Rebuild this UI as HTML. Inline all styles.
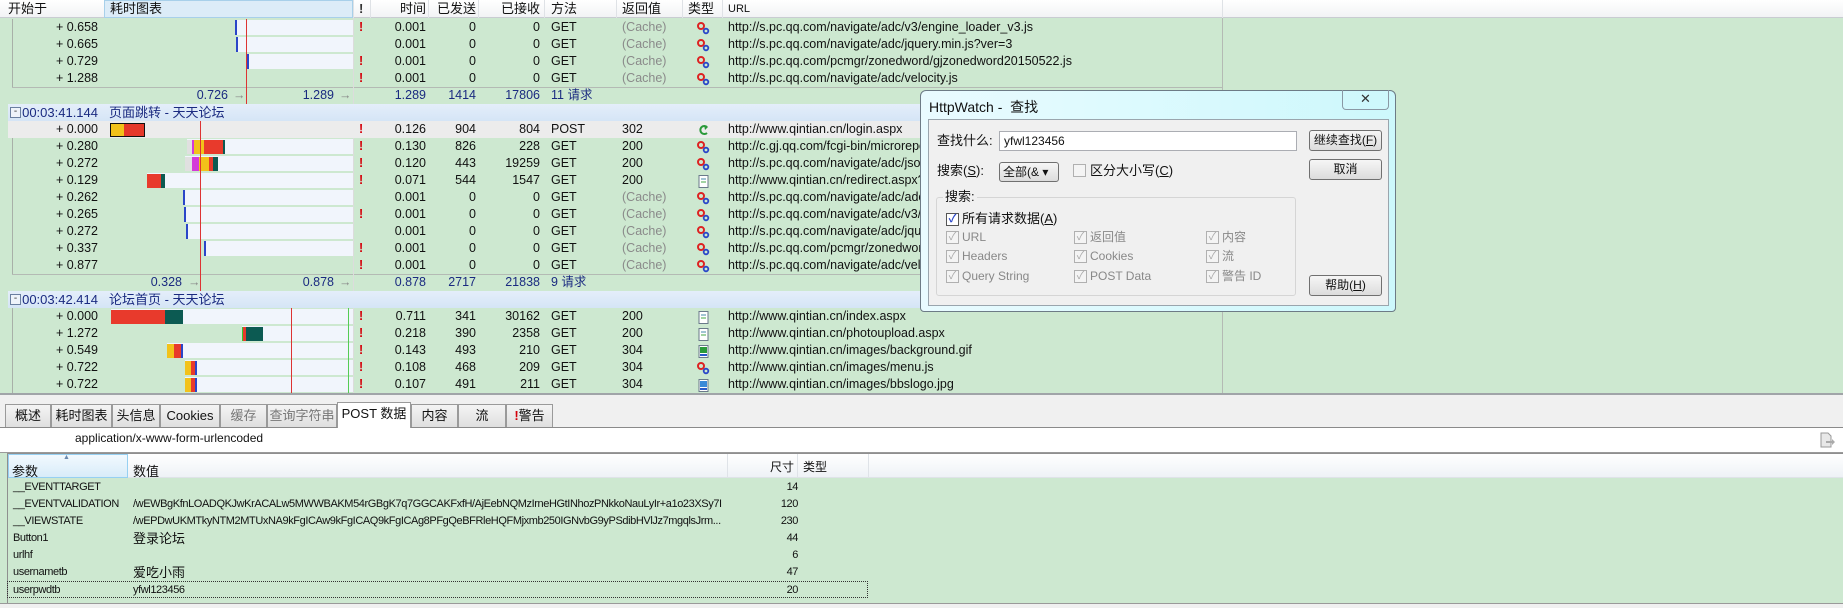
<!DOCTYPE html>
<html><head><meta charset="utf-8">
<style>
*{margin:0;padding:0;box-sizing:border-box}
body{width:1843px;height:608px;overflow:hidden;background:#cde8d0;font-family:"Liberation Sans","Noto Sans CJK SC",sans-serif;font-size:12px;color:#111;position:relative}
.a{position:absolute}
.hdr{left:0;top:0;width:1843px;height:18px;background:linear-gradient(#fff,#f2f3f5);border-bottom:1px solid #c9ccd2}
.hdr span{position:absolute;top:0;line-height:18px;font-size:13px}
.vd{position:absolute;top:0;width:1px;height:18px;background:#dfe2e6}
.r{position:absolute;left:0;width:1222px;height:17px}
.r span{position:absolute;top:0;line-height:17px;white-space:nowrap;font-size:12.5px}
.c0{left:0;width:98px;text-align:right}
.ex{left:359px;color:#d4000a;font-weight:bold}
.c1{left:370px;width:56px;text-align:right}
.c2{left:430px;width:46px;text-align:right}
.c3{left:480px;width:60px;text-align:right}
.c4{left:551px}
.c5{left:622px}
.g{color:#8a8a8a}
.url{left:728px}
.b{position:absolute;top:2px;height:14px}
.wb{position:absolute;top:1px;height:15px;background:#f1f5fc;right:869px}
.gh{position:absolute;left:8px;width:1214px;height:17px;background:linear-gradient(#e4eefa,#d5e5f6)}
.gh span{position:absolute;line-height:17px;color:#1a2a80;font-size:13px}
.sm span{color:#1a2a80}
.ico{position:absolute;left:697px;top:3px}
.tab{position:absolute;top:404px;height:24px;border:1px solid #9a9a9a;border-bottom:none;background:linear-gradient(#f4f4f4,#dedede);line-height:22px;text-align:center;font-size:13px}
.pr{position:absolute;left:7px;width:1836px;height:17px}
.pr span{position:absolute;line-height:17px;font-size:11px;letter-spacing:-0.4px;white-space:nowrap}
.dlg{left:920px;top:90px;width:476px;height:222px;background:linear-gradient(90deg,#e9fbff,#cdf8fc);border:1px solid #6d7b86;border-radius:6px 6px 4px 4px}
.cl{left:7px;top:28px;width:461px;height:187px;background:#f0f0f0;border:1px solid #9aa5ad}
.btn{position:absolute;width:73px;height:21px;border:1px solid #707070;border-radius:3px;background:linear-gradient(#f6f6f6,#dcdcdc);text-align:center;line-height:19px;font-size:12px}
.cb{position:absolute;width:13px;height:13px;border:1px solid #b0b0b0;background:#f4f4f4;font-size:11px;line-height:11px;text-align:center;color:#aaa}
.dl{position:absolute;font-size:12px;line-height:16px;white-space:nowrap}
.gr{color:#888}
</style></head><body>

<div class="a hdr">
<span style="left:8px">开始于</span>
<div class="a" style="left:104px;top:0;width:249px;height:18px;background:#dcecf8;border:1px solid #a8d0ea"></div>
<span style="left:110px">耗时图表</span>
<div class="vd" style="left:353px"></div>
<span style="left:359px;color:#333;font-weight:bold">!</span>
<div class="vd" style="left:370px"></div>
<span style="left:370px;width:56px;text-align:right">时间</span>
<div class="vd" style="left:428px"></div>
<span style="left:430px;width:46px;text-align:right">已发送</span>
<div class="vd" style="left:478px"></div>
<span style="left:480px;width:60px;text-align:right">已接收</span>
<div class="vd" style="left:544px"></div>
<span style="left:551px">方法</span>
<div class="vd" style="left:616px"></div>
<span style="left:622px">返回值</span>
<div class="vd" style="left:682px"></div>
<span style="left:688px">类型</span>
<div class="vd" style="left:722px"></div>
<span style="left:728px;font-size:11px">URL</span>
<div class="vd" style="left:1222px"></div>
</div>

<div class="a" style="left:12px;top:19px;width:1px;height:68px;background:#a8b0a8"></div>
<div class="a" style="left:12px;top:87px;width:1210px;height:1px;background:#b4bab4"></div>
<div class="a" style="left:12px;top:121px;width:1px;height:153px;background:#a8b0a8"></div>
<div class="a" style="left:12px;top:274px;width:1210px;height:1px;background:#b4bab4"></div>
<div class="a" style="left:12px;top:308px;width:1px;height:85px;background:#a8b0a8"></div>
<div class="a" style="left:1222px;top:18px;width:1px;height:375px;background:#b4bab4"></div>
<div class="a" style="left:353px;top:18px;width:1px;height:375px;background:#dcdcdc"></div>

<svg width="0" height="0" style="position:absolute">
<defs>
<g id="js"><circle cx="4" cy="4" r="3" fill="none" stroke="#d22" stroke-width="2"/><circle cx="9" cy="9" r="2.3" fill="none" stroke="#2a46c8" stroke-width="1.8"/></g>
<g id="doc"><rect x="2" y="0.5" width="9" height="12" fill="#fff" stroke="#6a7a8a"/><line x1="4" y1="4" x2="9" y2="4" stroke="#48a"/><line x1="4" y1="7" x2="9" y2="7" stroke="#4a4"/></g>
<g id="img"><rect x="2" y="0.5" width="9" height="12" fill="#fff" stroke="#6a7a8a"/><rect x="3" y="2" width="7" height="6" fill="#2a9a3a"/><rect x="3" y="9" width="7" height="2" fill="#2a5ac8"/></g>
<g id="img2"><rect x="2" y="0.5" width="9" height="12" fill="#fff" stroke="#6a7a8a"/><rect x="3" y="2" width="7" height="6" fill="#3a8ad8"/><rect x="3" y="9" width="7" height="2" fill="#2a5ac8"/></g>
</defs></svg>

<div class="r" style="top:19px"><div class="wb" style="left:235px;border-left:2px solid #2a46c8"></div><span class="c0">+ 0.658</span><span class="ex">!</span><span class="c1">0.001</span><span class="c2">0</span><span class="c3">0</span><span class="c4">GET</span><span class="c5 g">(Cache)</span><svg class="ico" width="13" height="13"><use href="#js"/></svg><span class="url">http://s.pc.qq.com/navigate/adc/v3/engine_loader_v3.js</span></div>
<div class="r" style="top:36px"><div class="wb" style="left:236px;border-left:2px solid #2a46c8"></div><span class="c0">+ 0.665</span><span class="c1">0.001</span><span class="c2">0</span><span class="c3">0</span><span class="c4">GET</span><span class="c5 g">(Cache)</span><svg class="ico" width="13" height="13"><use href="#js"/></svg><span class="url">http://s.pc.qq.com/navigate/adc/jquery.min.js?ver=3</span></div>
<div class="r" style="top:53px"><div class="wb" style="left:247px;border-left:2px solid #2a46c8"></div><span class="c0">+ 0.729</span><span class="ex">!</span><span class="c1">0.001</span><span class="c2">0</span><span class="c3">0</span><span class="c4">GET</span><span class="c5 g">(Cache)</span><svg class="ico" width="13" height="13"><use href="#js"/></svg><span class="url">http://s.pc.qq.com/pcmgr/zonedword/gjzonedword20150522.js</span></div>
<div class="r" style="top:70px"><span class="c0">+ 1.288</span><span class="ex">!</span><span class="c1">0.001</span><span class="c2">0</span><span class="c3">0</span><span class="c4">GET</span><span class="c5 g">(Cache)</span><svg class="ico" width="13" height="13"><use href="#js"/></svg><span class="url">http://s.pc.qq.com/navigate/adc/velocity.js</span></div>
<div class="r sm" style="top:87px"><span style="left:160px;width:68px;text-align:right">0.726</span><span style="left:233px;color:#888">→</span><span style="left:260px;width:74px;text-align:right">1.289</span><span style="left:339px;color:#888">→</span><span class="c1">1.289</span><span class="c2">1414</span><span class="c3">17806</span><span class="c4">11 请求</span></div>
<div class="a" style="left:246px;top:19px;width:1px;height:85px;background:#d33"></div>

<div class="gh" style="top:104px"><div class="a" style="left:2px;top:3px;width:11px;height:11px;border:1px solid #6a7fa0;background:#eef3fa;font-size:10px;line-height:8px;text-align:center;color:#333">-</div><span style="left:14px;width:76px;text-align:right">00:03:41.144</span><span style="left:101px">页面跳转 - 天天论坛</span></div>
<div class="r" style="top:121px;background:#ececec;left:8px;width:1214px"></div>
<div class="r" style="top:121px"><div class="b" style="left:110px;width:35px;border:1.5px solid #111;background:linear-gradient(90deg,#f2c21a 0 40%,#e5382a 40%)"></div><span class="c0">+ 0.000</span><span class="ex">!</span><span class="c1">0.126</span><span class="c2">904</span><span class="c3">804</span><span class="c4">POST</span><span class="c5">302</span><svg class="ico" width="13" height="13"><path d="M10 3 A4 4 0 1 0 10 9" fill="none" stroke="#2a9a3a" stroke-width="2"/><path d="M7 1 L11 3 L8 6Z" fill="#2a9a3a"/></svg><span class="url">http://www.qintian.cn/login.aspx</span></div>
<div class="r" style="top:138px"><div class="wb" style="left:187px;background:#f1f5fc"></div><div class="b" style="left:187px;width:5px;background:#e0e0e0"></div><div class="b" style="left:192px;width:2px;background:#d43ad8"></div><div class="b" style="left:194px;width:10px;background:#f2c21a"></div><div class="b" style="left:204px;width:19px;background:#e83a2c"></div><div class="b" style="left:223px;width:2px;background:#0c5a52"></div><span class="c0">+ 0.280</span><span class="ex">!</span><span class="c1">0.130</span><span class="c2">826</span><span class="c3">228</span><span class="c4">GET</span><span class="c5">200</span><svg class="ico" width="13" height="13"><use href="#js"/></svg><span class="url">http://c.gj.qq.com/fcgi-bin/microreport?</span></div>
<div class="r" style="top:155px"><div class="wb" style="left:185px"></div><div class="b" style="left:185px;width:7px;background:#e0e0e0"></div><div class="b" style="left:192px;width:7px;background:#d43ad8"></div><div class="b" style="left:199px;width:10px;background:#f2c21a"></div><div class="b" style="left:209px;width:4px;background:#e83a2c"></div><div class="b" style="left:213px;width:5px;background:#0c5a52"></div><span class="c0">+ 0.272</span><span class="ex">!</span><span class="c1">0.120</span><span class="c2">443</span><span class="c3">19259</span><span class="c4">GET</span><span class="c5">200</span><svg class="ico" width="13" height="13"><use href="#js"/></svg><span class="url">http://s.pc.qq.com/navigate/adc/json2.js</span></div>
<div class="r" style="top:172px"><div class="wb" style="left:147px"></div><div class="b" style="left:147px;width:14px;background:#e83a2c"></div><div class="b" style="left:161px;width:4px;background:#0c5a52"></div><span class="c0">+ 0.129</span><span class="ex">!</span><span class="c1">0.071</span><span class="c2">544</span><span class="c3">1547</span><span class="c4">GET</span><span class="c5">200</span><svg class="ico" width="13" height="13"><use href="#doc"/></svg><span class="url">http://www.qintian.cn/redirect.aspx?me</span></div>
<div class="r" style="top:189px"><div class="wb" style="left:183px;border-left:2px solid #2a46c8"></div><span class="c0">+ 0.262</span><span class="c1">0.001</span><span class="c2">0</span><span class="c3">0</span><span class="c4">GET</span><span class="c5 g">(Cache)</span><svg class="ico" width="13" height="13"><use href="#js"/></svg><span class="url">http://s.pc.qq.com/navigate/adc/adc_loader.js</span></div>
<div class="r" style="top:206px"><div class="wb" style="left:184px;border-left:2px solid #2a46c8"></div><span class="c0">+ 0.265</span><span class="ex">!</span><span class="c1">0.001</span><span class="c2">0</span><span class="c3">0</span><span class="c4">GET</span><span class="c5 g">(Cache)</span><svg class="ico" width="13" height="13"><use href="#js"/></svg><span class="url">http://s.pc.qq.com/navigate/adc/v3/engine</span></div>
<div class="r" style="top:223px"><div class="wb" style="left:186px;border-left:2px solid #2a46c8"></div><span class="c0">+ 0.272</span><span class="c1">0.001</span><span class="c2">0</span><span class="c3">0</span><span class="c4">GET</span><span class="c5 g">(Cache)</span><svg class="ico" width="13" height="13"><use href="#js"/></svg><span class="url">http://s.pc.qq.com/navigate/adc/jquery</span></div>
<div class="r" style="top:240px"><div class="wb" style="left:204px;border-left:2px solid #2a46c8"></div><span class="c0">+ 0.337</span><span class="ex">!</span><span class="c1">0.001</span><span class="c2">0</span><span class="c3">0</span><span class="c4">GET</span><span class="c5 g">(Cache)</span><svg class="ico" width="13" height="13"><use href="#js"/></svg><span class="url">http://s.pc.qq.com/pcmgr/zonedword/gj</span></div>
<div class="r" style="top:257px"><span class="c0">+ 0.877</span><span class="ex">!</span><span class="c1">0.001</span><span class="c2">0</span><span class="c3">0</span><span class="c4">GET</span><span class="c5 g">(Cache)</span><svg class="ico" width="13" height="13"><use href="#js"/></svg><span class="url">http://s.pc.qq.com/navigate/adc/velocity.js</span></div>
<div class="r sm" style="top:274px"><span style="left:120px;width:62px;text-align:right">0.328</span><span style="left:188px;color:#888">→</span><span style="left:260px;width:74px;text-align:right">0.878</span><span style="left:339px;color:#888">→</span><span class="c1">0.878</span><span class="c2">2717</span><span class="c3">21838</span><span class="c4">9 请求</span></div>
<div class="a" style="left:200px;top:121px;width:1px;height:170px;background:#d33"></div>

<div class="gh" style="top:291px"><div class="a" style="left:2px;top:3px;width:11px;height:11px;border:1px solid #6a7fa0;background:#eef3fa;font-size:10px;line-height:8px;text-align:center;color:#333">-</div><span style="left:14px;width:76px;text-align:right">00:03:42.414</span><span style="left:101px">论坛首页 - 天天论坛</span></div>
<div class="r" style="top:308px"><div class="wb" style="left:111px"></div><div class="b" style="left:111px;width:54px;background:#e83a2c"></div><div class="b" style="left:165px;width:18px;background:#0c5a52"></div><span class="c0">+ 0.000</span><span class="ex">!</span><span class="c1">0.711</span><span class="c2">341</span><span class="c3">30162</span><span class="c4">GET</span><span class="c5">200</span><svg class="ico" width="13" height="13"><use href="#doc"/></svg><span class="url">http://www.qintian.cn/index.aspx</span></div>
<div class="r" style="top:325px"><div class="wb" style="left:242px"></div><div class="b" style="left:242px;width:4px;background:#e83a2c;border-left:1px solid #3c3"></div><div class="b" style="left:246px;width:17px;background:#0c5a52"></div><span class="c0">+ 1.272</span><span class="ex">!</span><span class="c1">0.218</span><span class="c2">390</span><span class="c3">2358</span><span class="c4">GET</span><span class="c5">200</span><svg class="ico" width="13" height="13"><use href="#doc"/></svg><span class="url">http://www.qintian.cn/photoupload.aspx</span></div>
<div class="r" style="top:342px"><div class="wb" style="left:167px"></div><div class="b" style="left:167px;width:7px;background:#f2c21a"></div><div class="b" style="left:174px;width:7px;background:#e83a2c"></div><div class="b" style="left:181px;width:2px;background:#2a46c8"></div><span class="c0">+ 0.549</span><span class="ex">!</span><span class="c1">0.143</span><span class="c2">493</span><span class="c3">210</span><span class="c4">GET</span><span class="c5">304</span><svg class="ico" width="13" height="13"><use href="#img"/></svg><span class="url">http://www.qintian.cn/images/background.gif</span></div>
<div class="r" style="top:359px"><div class="wb" style="left:185px"></div><div class="b" style="left:185px;width:6px;background:#f2c21a"></div><div class="b" style="left:191px;width:4px;background:#e83a2c"></div><div class="b" style="left:195px;width:2px;background:#2a46c8"></div><span class="c0">+ 0.722</span><span class="ex">!</span><span class="c1">0.108</span><span class="c2">468</span><span class="c3">209</span><span class="c4">GET</span><span class="c5">304</span><svg class="ico" width="13" height="13"><use href="#js"/></svg><span class="url">http://www.qintian.cn/images/menu.js</span></div>
<div class="r" style="top:376px"><div class="wb" style="left:185px"></div><div class="b" style="left:185px;width:6px;background:#f2c21a"></div><div class="b" style="left:191px;width:4px;background:#e83a2c"></div><div class="b" style="left:195px;width:2px;background:#2a46c8"></div><span class="c0">+ 0.722</span><span class="ex">!</span><span class="c1">0.107</span><span class="c2">491</span><span class="c3">211</span><span class="c4">GET</span><span class="c5">304</span><svg class="ico" width="13" height="13"><use href="#img2"/></svg><span class="url">http://www.qintian.cn/images/bbslogo.jpg</span></div>
<div class="a" style="left:291px;top:308px;width:1px;height:85px;background:#d33"></div>
<div class="a" style="left:348px;top:308px;width:1px;height:85px;background:#5c5"></div>

<div class="a" style="left:0;top:393px;width:1843px;height:35px;background:#f0f0f0;border-top:2px solid #a0a4a8"></div>
<div class="tab" style="left:5px;width:46px">概述</div>
<div class="tab" style="left:51px;width:61px">耗时图表</div>
<div class="tab" style="left:112px;width:48px">头信息</div>
<div class="tab" style="left:160px;width:60px">Cookies</div>
<div class="tab" style="left:220px;width:47px;color:#777">缓存</div>
<div class="tab" style="left:267px;width:70px;color:#777">查询字符串</div>
<div class="tab" style="left:337px;width:74px;background:#fff;top:402px;height:26px;z-index:2">POST 数据</div>
<div class="tab" style="left:411px;width:47px">内容</div>
<div class="tab" style="left:458px;width:48px">流</div>
<div class="tab" style="left:506px;width:47px"><b style="color:#d4000a">!</b>警告</div>
<div class="a" style="left:0;top:427px;width:1843px;height:26px;background:#fff;border-top:1px solid #8a8a8a;border-bottom:1px solid #9a9a9a"></div>
<div class="a" style="left:75px;top:431px;font-size:12px">application/x-www-form-urlencoded</div>
<svg class="a" style="left:1818px;top:432px" width="18" height="16"><path d="M3 1h7l3 3v11H3z" fill="#e8e8e8" stroke="#999"/><path d="M8 9h6v-2l3 3-3 3v-2H8z" fill="#aaa"/></svg>

<div class="a" style="left:7px;top:453px;width:1836px;height:155px;border:1px solid #8f8f8f;border-right:none"></div>
<div class="a" style="left:8px;top:454px;width:1835px;height:24px;background:linear-gradient(#fff,#eef2f6);border-bottom:1px solid #dfe3e8"></div>
<div class="a" style="left:8px;top:454px;width:120px;height:24px;background:linear-gradient(#f2f9fe,#d8ecf9);border:1px solid #96d0f2"></div>
<div class="a" style="left:63px;top:454px;font-size:7px;color:#6a8ab0">▲</div>
<div class="a" style="left:12px;top:461px;font-size:13px">参数</div>
<div class="a" style="left:133px;top:461px;font-size:13px">数值</div>
<div class="a" style="left:727px;top:454px;width:1px;height:24px;background:#dfe3e8"></div>
<div class="a" style="left:760px;top:458px;width:34px;text-align:right;font-size:12px">尺寸</div>
<div class="a" style="left:797px;top:454px;width:1px;height:24px;background:#dfe3e8"></div>
<div class="a" style="left:803px;top:458px;font-size:12px">类型</div>
<div class="a" style="left:868px;top:454px;width:1px;height:24px;background:#dfe3e8"></div>
<div class="a" style="left:8px;top:478px;width:1835px;height:125px;background:#cde8d0"></div>
<div class="a" style="left:0;top:603px;width:1843px;height:5px;background:#f0f0f0;border-top:1px solid #999"></div>

<div class="pr" style="top:479px"><span style="left:6px">__EVENTTARGET</span><span style="left:740px;width:51px;text-align:right">14</span></div>
<div class="pr" style="top:496px"><span style="left:6px">__EVENTVALIDATION</span><span style="left:126px">/wEWBgKfnLOADQKJwKrACALw5MWWBAKM54rGBgK7q7GGCAKFxfH/AjEebNQMzIrneHGtINhozPNkkoNauLyIr+a1o23XSy7I</span><span style="left:740px;width:51px;text-align:right">120</span></div>
<div class="pr" style="top:513px"><span style="left:6px">__VIEWSTATE</span><span style="left:126px">/wEPDwUKMTkyNTM2MTUxNA9kFgICAw9kFgICAQ9kFgICAg8PFgQeBFRleHQFMjxmb250IGNvbG9yPSdibHVlJz7mgqlsJrm...</span><span style="left:740px;width:51px;text-align:right">230</span></div>
<div class="pr" style="top:530px"><span style="left:6px">Button1</span><span style="left:126px;font-size:13px;letter-spacing:0">登录论坛</span><span style="left:740px;width:51px;text-align:right">44</span></div>
<div class="pr" style="top:547px"><span style="left:6px">urlhf</span><span style="left:740px;width:51px;text-align:right">6</span></div>
<div class="pr" style="top:564px"><span style="left:6px">usernametb</span><span style="left:126px;font-size:13px;letter-spacing:0">爱吃小雨</span><span style="left:740px;width:51px;text-align:right">47</span></div>
<div class="pr" style="top:581px;width:861px;border:1px dotted #333"><span style="left:5px">userpwdtb</span><span style="left:125px">yfwl123456</span><span style="left:739px;width:51px;text-align:right">20</span></div>

<div class="a dlg">
<div class="a" style="left:8px;top:6px;font-size:14px;color:#111">HttpWatch - &nbsp;查找</div>
<div class="a" style="left:421px;top:-1px;width:47px;height:20px;border:1px solid #8a98a4;border-top:none;border-radius:0 0 4px 4px;text-align:center;line-height:18px;font-size:13px;color:#333">✕</div>
<div class="a cl">
<div class="dl" style="left:8px;top:13px;font-size:13px">查找什么:</div>
<div class="a" style="left:70px;top:11px;width:298px;height:20px;background:#fff;border:1px solid #abadb3"><span class="dl" style="left:4px;top:1px">yfwl123456</span></div>
<div class="btn" style="left:380px;top:10px">继续查找(<u>F</u>)</div>
<div class="dl" style="left:8px;top:43px;font-size:13px">搜索(<u>S</u>):</div>
<div class="a" style="left:70px;top:42px;width:60px;height:20px;border:1px solid #707070;border-radius:3px;background:linear-gradient(#f6f6f6,#dcdcdc)"><span class="dl" style="left:3px;top:1px">全部(&amp; ▾</span></div>
<div class="cb" style="left:144px;top:44px"></div>
<div class="dl" style="left:161px;top:43px;font-size:13px">区分大小写(<u>C</u>)</div>
<div class="btn" style="left:380px;top:39px">取消</div>
<div class="a" style="left:7px;top:77px;width:360px;height:99px;border:1px solid #d5d5d5;border-radius:3px"></div>
<div class="dl" style="left:14px;top:69px;background:#f0f0f0;padding:0 2px;font-size:13px">搜索:</div>
<div class="cb" style="left:17px;top:93px;border-color:#555;background:#fff;color:#2a46c8;font-weight:bold">✓</div>
<div class="dl" style="left:33px;top:91px;font-size:13px">所有请求数据(<u>A</u>)</div>
<div class="cb" style="left:17px;top:111px">✓</div><div class="dl gr" style="left:33px;top:109px">URL</div>
<div class="cb" style="left:145px;top:111px">✓</div><div class="dl gr" style="left:161px;top:109px">返回值</div>
<div class="cb" style="left:277px;top:111px">✓</div><div class="dl gr" style="left:293px;top:109px">内容</div>
<div class="cb" style="left:17px;top:130px">✓</div><div class="dl gr" style="left:33px;top:128px">Headers</div>
<div class="cb" style="left:145px;top:130px">✓</div><div class="dl gr" style="left:161px;top:128px">Cookies</div>
<div class="cb" style="left:277px;top:130px">✓</div><div class="dl gr" style="left:293px;top:128px">流</div>
<div class="cb" style="left:17px;top:150px">✓</div><div class="dl gr" style="left:33px;top:148px">Query String</div>
<div class="cb" style="left:145px;top:150px">✓</div><div class="dl gr" style="left:161px;top:148px">POST Data</div>
<div class="cb" style="left:277px;top:150px">✓</div><div class="dl gr" style="left:293px;top:148px">警告 ID</div>
<div class="btn" style="left:380px;top:155px">帮助(<u>H</u>)</div>
</div>
</div>
</body></html>
